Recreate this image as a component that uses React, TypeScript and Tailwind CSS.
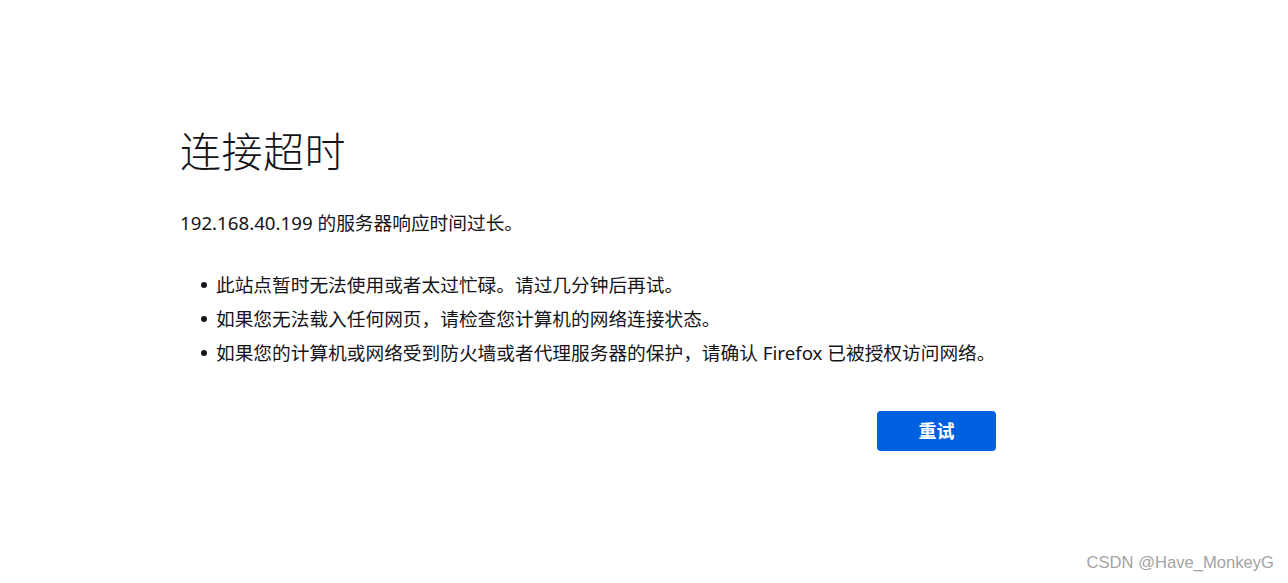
import React from 'react';

const tips = [
  '此站点暂时无法使用或者太过忙碌。请过几分钟后再试。',
  '如果您无法载入任何网页，请检查您计算机的网络连接状态。',
  '如果您的计算机或网络受到防火墙或者代理服务器的保护，请确认 Firefox 已被授权访问网络。',
];

const App: React.FC = () => {
  return (
    <div
      className="relative h-[583px] w-full overflow-hidden bg-white text-[#15141a]"
      style={{ fontFamily: '"Noto Sans", "Noto Sans CJK SC", sans-serif' }}
    >
      <div className="ml-[180px] w-[816px] pt-[127px]">
        <h1 className="text-[41px] font-light leading-[48px] tracking-[0.5px]">连接超时</h1>

        <p className="mt-[36px] text-[18.7px] leading-[24px]">
          192.168.40.199 的服务器响应时间过长。
        </p>

        <ul className="mt-[33px]">
          {tips.map((tip) => (
            <li
              key={tip}
              className="flex items-center whitespace-nowrap pl-[21px] text-[18.7px] leading-[34px]"
            >
              <span className="mr-[9px] h-[6px] w-[6px] shrink-0 rounded-full bg-[#15141a]" />
              <span>{tip}</span>
            </li>
          ))}
        </ul>

        <div className="mt-[41px] flex justify-end">
          <button className="h-[40px] w-[119px] rounded-[4px] bg-[#0061e0] text-[18px] font-bold text-white">
            重试
          </button>
        </div>
      </div>

      {/* watermark */}
      <div
        className="absolute bottom-[10px] right-[14px] text-[16.6px] leading-[20px] text-[#a3a3a3]"
        style={{ fontFamily: '"Liberation Sans", Arial, sans-serif' }}
      >
        CSDN @Have_MonkeyG
      </div>
    </div>
  );
};

export default App;
